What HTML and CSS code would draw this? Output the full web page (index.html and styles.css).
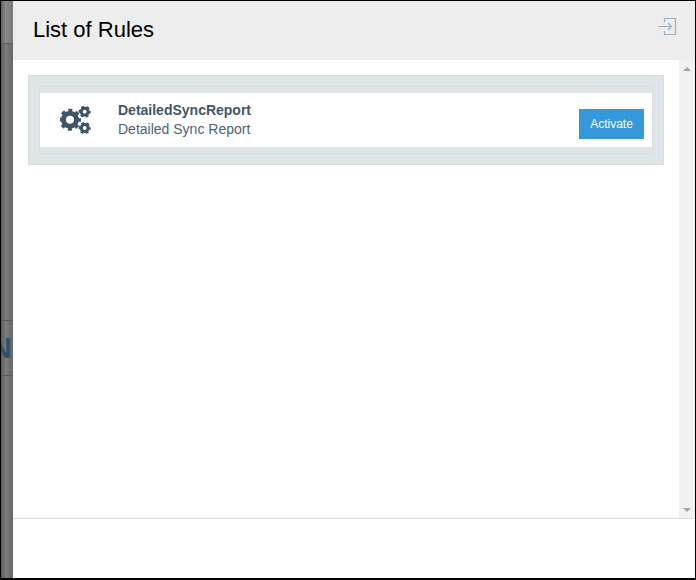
FILE: index.html
```html
<!DOCTYPE html>
<html lang="en">
<head>
<meta charset="utf-8">
<title>List of Rules</title>
<link rel="stylesheet" href="styles.css">
</head>
<body>
<div class="frame">
  <div class="backdrop">
    <div class="band-top"></div>
    <div class="band-mid"><span class="letter">N</span></div>
    <div class="band-rest"></div>
  </div>
  <div class="panel">
    <header class="head">
      <h1 class="title">List of Rules</h1>
      <svg class="exit" width="20" height="20" viewBox="0 0 20 20" fill="none" stroke="#9dafc1" stroke-width="1.2">
        <path d="M7.5 5V1.5H18.5V17.5H7.5V14"/>
        <path d="M1 9.5H14.5M11 6L14.5 9.5L11 13"/>
      </svg>
    </header>
    <div class="content">
      <main class="list">
        <section class="well">
          <div class="rule">
            <div class="rule-body">
              <svg class="gears" width="32" height="30" viewBox="0 0 32 30">
                <g fill="none" stroke="#3f5468">
                  <circle cx="10" cy="14.7" r="6.5" stroke-width="5"/>
                  <circle cx="10" cy="14.7" r="9.5" stroke-width="3" stroke-dasharray="4 3.46" stroke-dashoffset="2"/>
                  <circle cx="24.7" cy="6.7" r="3.4" stroke-width="3"/>
                  <circle cx="24.7" cy="6.7" r="5.2" stroke-width="1.8" stroke-dasharray="3 2.45" stroke-dashoffset="1.5"/>
                  <circle cx="24.7" cy="23" r="3.4" stroke-width="3"/>
                  <circle cx="24.7" cy="23" r="5.2" stroke-width="1.8" stroke-dasharray="3 2.45" stroke-dashoffset="1.5"/>
                </g>
              </svg>
              <div class="rule-text">
                <div class="rule-name">DetailedSyncReport</div>
                <div class="rule-desc">Detailed Sync Report</div>
              </div>
              <button class="activate" type="button">Activate</button>
            </div>
          </div>
        </section>
      </main>
      <div class="scrollbar">
        <span class="arrow-up"></span>
        <span class="arrow-down"></span>
      </div>
    </div>
    <footer class="foot"></footer>
  </div>
</div>
</body>
</html>
```
FILE: styles.css
```css
* { box-sizing: border-box; }
html, body { margin: 0; padding: 0; }
body { width: 696px; height: 580px; overflow: hidden; background: #fff; font-family: "Liberation Sans", Arial, sans-serif; }
.frame { width: 696px; height: 580px; display: flex; border-style: solid; border-color: #000; border-width: 1px 1px 2px 1px; }
.backdrop { width: 12px; flex: none; display: flex; flex-direction: column; background: linear-gradient(90deg, #5a5a5a, #7c7c7c 40%, #666); overflow: hidden; }
.band-top { height: 43px; flex: none; background: linear-gradient(90deg, #666, #8a8a8a 40%, #777); border-bottom: 1px solid #5e5e5e; }
.band-mid { margin-top: 276px; height: 56px; flex: none; border-top: 1px solid #5c5c5c; border-bottom: 1px solid #5c5c5c; display: flex; align-items: center; justify-content: flex-end; overflow: hidden; }
.band-rest { flex: 1; }
.letter { font-weight: 700; font-size: 30px; line-height: 1; color: #2a5569; margin-right: 1px; white-space: nowrap; }
.panel { flex: 1; min-width: 0; display: flex; flex-direction: column; background: #fff; }
.head { height: 59px; flex: none; background: #ededed; display: flex; align-items: flex-start; justify-content: space-between; padding: 0 18px 0 20px; }
.title { margin: 16px 0 0; font-size: 22px; line-height: 26px; font-weight: 400; color: #000; }
.exit { margin-top: 16px; }
.content { flex: 1; min-height: 0; display: flex; }
.list { flex: 1; min-width: 0; padding: 15px 15px 0; }
.well { height: 90px; background: #dee5e7; border: 1px solid #d8dcde; padding: 10px; }
.rule { height: 68px; background: #dee5e7; border: 1px solid #dcdcdc; padding-top: 6px; }
.rule-body { height: 54px; background: #fff; display: flex; align-items: flex-start; }
.gears { margin: 12px 0 0 20px; flex: none; }
.rule-text { flex: 1; margin: 8px 0 0 26px; font-size: 14px; line-height: 19px; color: #41566a; }
.rule-name { font-weight: 700; }
.rule-desc { font-weight: 400; color: #4d6478; }
.activate { width: 65px; height: 30px; margin: 16px 8px 0 0; padding: 0; border: 0; border-radius: 0; background: #3498db; color: #fff; font: 12px "Liberation Sans", Arial, sans-serif; }
.scrollbar { width: 16px; flex: none; background: #f1f1f1; display: flex; flex-direction: column; justify-content: space-between; align-items: center; padding: 7px 0 6px; }
.arrow-up { width: 0; height: 0; border-left: 4px solid transparent; border-right: 4px solid transparent; border-bottom: 4px solid #a3a3a3; }
.arrow-down { width: 0; height: 0; border-left: 4px solid transparent; border-right: 4px solid transparent; border-top: 4px solid #a3a3a3; }
.foot { height: 60px; flex: none; border-top: 1px solid #dcdcdc; background: #fff; }
```
